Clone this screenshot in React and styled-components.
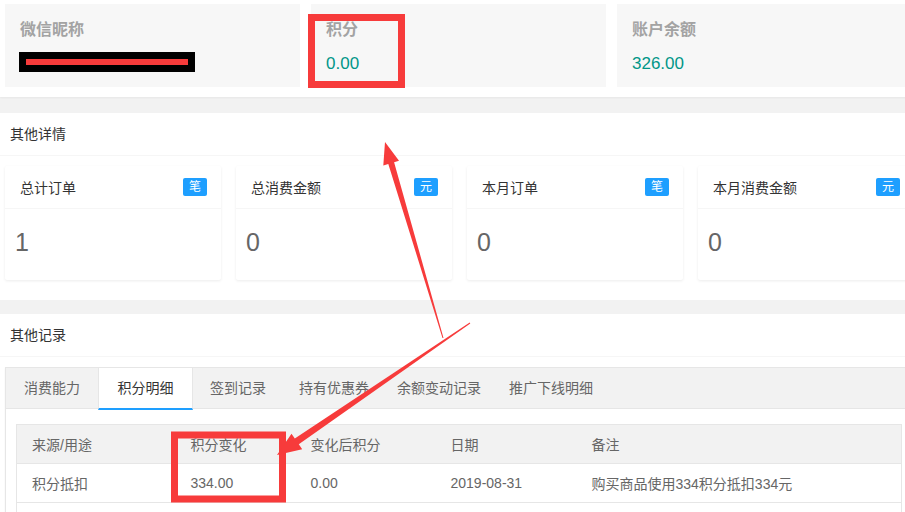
import React from 'react';
import styled, { createGlobalStyle } from 'styled-components';

const GlobalStyle = createGlobalStyle`
  html, body {
    margin: 0;
    padding: 0;
    background: #f2f2f2;
    overflow: hidden;
  }
  body {
    font-family: "Liberation Sans", "Noto Sans CJK SC", sans-serif;
    font-size: 14px;
    color: #333;
  }
`;

const summary = [
  { title: '微信昵称', hidden: true },
  { title: '积分', value: '0.00' },
  { title: '账户余额', value: '326.00' },
];

const stats = [
  { title: '总计订单', unit: '笔', value: '1' },
  { title: '总消费金额', unit: '元', value: '0' },
  { title: '本月订单', unit: '笔', value: '0' },
  { title: '本月消费金额', unit: '元', value: '0' },
];

const tabs = [
  { label: '消费能力', width: 92 },
  { label: '积分明细', width: 95, active: true },
  { label: '签到记录', width: 90 },
  { label: '持有优惠券', width: 102 },
  { label: '余额变动记录', width: 108 },
  { label: '推广下线明细', width: 116 },
];

const columns = [
  { label: '来源/用途', width: 159 },
  { label: '积分变化', width: 120 },
  { label: '变化后积分', width: 140 },
  { label: '日期', width: 141 },
  { label: '备注' },
];

// second row only shows its top border inside the frame
const rows = [
  ['积分抵扣', '334.00', '0.00', '2019-08-31', '购买商品使用334积分抵扣334元'],
  ['', '', '', '', ''],
];

const Page = styled.div`
  position: relative;
  width: 918px;
`;

const TopSection = styled.div`
  display: grid;
  grid-template-columns: repeat(3, 295px);
  gap: 11px;
  padding: 4px 5px 10px;
  background: #fff;
  box-shadow: 0 1px 2px rgba(0, 0, 0, 0.05);
`;

const TopCard = styled.div`
  height: 83px;
  box-sizing: border-box;
  padding: 15px 15px 0;
  background: #f7f7f7;
`;

const TopTitle = styled.div`
  font-size: 16px;
  line-height: 22px;
  font-weight: bold;
  color: #a3a3a3;
`;

const TopValue = styled.div`
  margin-top: 12px;
  font-size: 17px;
  line-height: 22px;
  color: #009688;
`;

const Redacted = styled.div`
  margin-top: 11px;
  margin-left: -1px;
  width: 176px;
  height: 20px;
  background: #000;
  display: flex;
  align-items: center;
  justify-content: center;

  &::after {
    content: '';
    width: 162px;
    height: 6px;
    background: #f73b3b;
  }
`;

const Section = styled.div`
  margin-top: ${p => p.$gap}px;
  background: #fff;
`;

const SectionHeader = styled.div`
  height: 42px;
  line-height: 42px;
  padding: 0 10px;
  border-bottom: 1px solid #f6f6f6;
  font-size: 14px;
  color: #333;
`;

const SectionBody = styled.div`
  padding: 10px 5px ${p => p.$bottom}px;
`;

const StatGrid = styled.div`
  display: grid;
  grid-template-columns: repeat(4, 216px);
  gap: 15px;
`;

const StatCard = styled.div`
  background: #fff;
  border-radius: 2px;
  box-shadow: 0 1px 3px rgba(0, 0, 0, 0.08);
`;

const StatHeader = styled.div`
  display: flex;
  align-items: center;
  justify-content: space-between;
  height: 42px;
  padding: 0 14px 0 15px;
  border-bottom: 1px solid #f6f6f6;
  color: #333;
`;

const Badge = styled.span`
  display: inline-block;
  height: 18px;
  line-height: 18px;
  padding: 0 6px;
  border-radius: 2px;
  background: #1e9fff;
  color: #fff;
  font-size: 12px;
`;

const StatValue = styled.div`
  height: 71px;
  box-sizing: border-box;
  padding: 10px 10px 0;
  font-size: 25px;
  line-height: 46px;
  color: #666;
`;

const TabBox = styled.div`
  border: 1px solid #e6e6e6;
  box-shadow: 0 1px 2px rgba(0, 0, 0, 0.05);
`;

const TabBar = styled.div`
  display: flex;
  height: 40px;
  background: #f2f2f2;
  border-bottom: 1px solid #e6e6e6;
`;

const Tab = styled.div`
  box-sizing: border-box;
  flex: none;
  height: ${p => (p.$active ? 42 : 40)}px;
  line-height: 40px;
  text-align: center;
  color: ${p => (p.$active ? '#333' : '#666')};
  background: ${p => (p.$active ? '#fff' : 'transparent')};
  border-left: ${p => (p.$active ? '1px solid #e6e6e6' : 'none')};
  border-right: ${p => (p.$active ? '1px solid #e6e6e6' : 'none')};
  border-bottom: ${p => (p.$active ? '2px solid #1e9fff' : 'none')};
`;

const TabContent = styled.div`
  padding: 15px 10px;
`;

const Table = styled.table`
  width: 100%;
  border-collapse: collapse;
  table-layout: fixed;
  color: #666;
  font-size: 14px;
`;

const Th = styled.th`
  height: 39px;
  padding: 0 15px;
  box-sizing: border-box;
  text-align: left;
  font-weight: normal;
  background: #f2f2f2;
  border: 1px solid #e6e6e6;
  border-left: ${p => (p.$first ? '1px solid #e6e6e6' : 'none')};
  border-right: ${p => (p.$last ? '1px solid #e6e6e6' : 'none')};
`;

const Td = styled.td`
  height: 39px;
  padding: 0 15px;
  box-sizing: border-box;
  border-bottom: 1px solid #e6e6e6;
  border-left: ${p => (p.$first ? '1px solid #e6e6e6' : 'none')};
  border-right: ${p => (p.$last ? '1px solid #e6e6e6' : 'none')};
  white-space: nowrap;
`;

const Marks = styled.svg`
  position: absolute;
  top: 0;
  left: 0;
  pointer-events: none;
`;

const RED = '#f73b3b';

const Annotations = () => (
  <Marks width="918" height="512" viewBox="0 0 918 512">
    <rect x="311.5" y="17.5" width="90" height="67" fill="none" stroke={RED} strokeWidth="7" />
    <rect x="174.5" y="435" width="108" height="64" fill="none" stroke={RED} strokeWidth="7" />
    <polygon
      fill={RED}
      points="385,142 399,160.8 394.1,162.3 443.5,337.9 442.5,338.1 388.3,164 383.3,165.6"
    />
    <polygon
      fill={RED}
      points="277,455 291.5,433.8 294.8,438.6 469.7,322.6 470.3,323.4 298.8,444.3 302.2,449.2"
    />
  </Marks>
);

const App = () => {
  return (
    <Page>
      <GlobalStyle />
      <TopSection>
        {summary.map(item => (
          <TopCard key={item.title}>
            <TopTitle>{item.title}</TopTitle>
            {item.hidden ? <Redacted /> : <TopValue>{item.value}</TopValue>}
          </TopCard>
        ))}
      </TopSection>

      <Section $gap={16}>
        <SectionHeader>其他详情</SectionHeader>
        <SectionBody $bottom={20}>
          <StatGrid>
            {stats.map(s => (
              <StatCard key={s.title}>
                <StatHeader>
                  <span>{s.title}</span>
                  <Badge>{s.unit}</Badge>
                </StatHeader>
                <StatValue>{s.value}</StatValue>
              </StatCard>
            ))}
          </StatGrid>
        </SectionBody>
      </Section>

      <Section $gap={14}>
        <SectionHeader>其他记录</SectionHeader>
        <SectionBody $bottom={10}>
          <TabBox>
            <TabBar>
              {tabs.map(t => (
                <Tab key={t.label} $active={t.active} style={{ width: t.width }}>
                  {t.label}
                </Tab>
              ))}
            </TabBar>
            <TabContent>
              <Table>
                <colgroup>
                  {columns.map(c => (
                    <col key={c.label} style={c.width ? { width: c.width } : undefined} />
                  ))}
                </colgroup>
                <thead>
                  <tr>
                    {columns.map((c, i) => (
                      <Th key={c.label} $first={i === 0} $last={i === columns.length - 1}>
                        {c.label}
                      </Th>
                    ))}
                  </tr>
                </thead>
                <tbody>
                  {rows.map((r, ri) => (
                    <tr key={ri}>
                      {r.map((cell, i) => (
                        <Td key={i} $first={i === 0} $last={i === r.length - 1}>
                          {cell}
                        </Td>
                      ))}
                    </tr>
                  ))}
                </tbody>
              </Table>
            </TabContent>
          </TabBox>
        </SectionBody>
      </Section>

      <Annotations />
    </Page>
  );
};

export default App;
